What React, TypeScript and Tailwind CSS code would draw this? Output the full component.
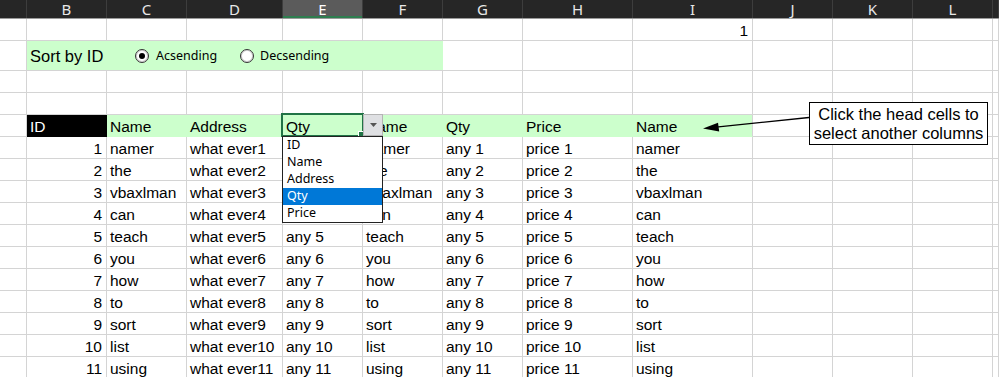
import React from "react";
import clsx from "clsx";

// column widths, A is only partly visible at the left edge
const cols = [
  "w-[27px]",
  "w-[80px]",
  "w-[80px]",
  "w-[96px]",
  "w-[80px]",
  "w-[80px]",
  "w-[80px]",
  "w-[110px]",
  "w-[120px]",
  "w-[80px]",
  "w-[80px]",
  "w-[80px]",
  "flex-1",
];
const letters = ["", "B", "C", "D", "E", "F", "G", "H", "I", "J", "K", "L", ""];

const words = ["namer", "the", "vbaxlman", "can", "teach", "you", "how", "to", "sort", "list", "using"];

type CellDef = { t?: React.ReactNode; right?: boolean; cls?: string };

function Cell({ i, def }: { i: number; def: CellDef }) {
  return (
    <div
      className={clsx(
        "shrink-0 h-full flex items-center pt-[2px] border-r border-b whitespace-nowrap overflow-visible",
        cols[i],
        def.cls ?? "border-[#d4d4d4]",
        def.right ? "justify-end pr-[4px]" : "pl-[3px]"
      )}
    >
      {def.t}
    </div>
  );
}

function Row({ cells, h = "h-[22px]" }: { cells: CellDef[]; h?: string }) {
  return (
    <div className={clsx("flex", h)}>
      {cols.map((_, i) => (
        <Cell key={i} i={i} def={cells[i] ?? {}} />
      ))}
    </div>
  );
}

function Radio({ checked }: { checked?: boolean }) {
  return (
    <span className="w-[14px] h-[14px] shrink-0 rounded-full border border-[#333] bg-white shadow-[inset_0_0_0_1px_#cfcfcf] flex items-center justify-center">
      {checked && <span className="w-[6px] h-[6px] rounded-full bg-black" />}
    </span>
  );
}

const green = "bg-[#ccffcc] border-[#ccffcc]";

export default function App() {
  return (
    <div className="relative w-[999px] h-[377px] overflow-hidden bg-white text-black font-['Liberation_Sans',Arial,sans-serif] text-[15.5px]">
      {/* column letters */}
      <div className="flex h-[19px] bg-[#262626] border-b border-[#9a9a9a]">
        {cols.map((c, i) => (
          <div
            key={i}
            className={clsx(
              "shrink-0 h-full flex items-center justify-center border-r border-[#3d3d3d] font-['Noto_Sans',sans-serif] text-[15px] leading-none",
              c,
              letters[i] === "E" ? "bg-[#5b5b5b] text-white shadow-[inset_0_-2px_0_#2e7d4f]" : "text-[#e8e8e8]"
            )}
          >
            {letters[i]}
          </div>
        ))}
      </div>

      {/* row 1 */}
      <Row cells={{ 8: { t: "1", right: true } } as unknown as CellDef[]} />

      {/* row 2: sort options */}
      <div className="flex h-[30px]">
        <div className={clsx("shrink-0 h-full border-r border-b border-[#d4d4d4]", cols[0])} />
        <div className="shrink-0 w-[416px] h-full bg-[#ccffcc] border-b border-[#d4d4d4] flex items-center pt-[1px] pl-[3px]">
          <span className="w-[105px] text-[16.5px]">Sort by ID</span>
          <Radio checked />
          <span className="ml-[7px] w-[84px] font-['Noto_Sans',sans-serif] text-[12.5px]">Acsending</span>
          <Radio />
          <span className="ml-[6px] font-['Noto_Sans',sans-serif] text-[12.5px]">Decsending</span>
        </div>
        {cols.slice(6).map((c, i) => (
          <div key={i} className={clsx("shrink-0 h-full border-r border-b border-[#d4d4d4]", c)} />
        ))}
      </div>

      <Row cells={[]} />
      <Row cells={[]} />

      {/* table head */}
      <Row
        cells={[
          {},
          { t: <span className="text-white">ID</span>, cls: "bg-black border-black" },
          { t: "Name", cls: green },
          { t: "Address", cls: green },
          { t: "Qty", cls: green },
          { t: "Name", cls: green },
          { t: "Qty", cls: green },
          { t: "Price", cls: green },
          { t: "Name", cls: "bg-[#ccffcc] border-b-[#ccffcc] border-r-[#d4d4d4]" },
        ]}
      />

      {words.map((w, i) => (
        <Row
          key={w}
          cells={[
            {},
            { t: i + 1, right: true },
            { t: w },
            { t: `what ever${i + 1}` },
            { t: `any ${i + 1}` },
            { t: w },
            { t: `any ${i + 1}` },
            { t: `price ${i + 1}` },
            { t: w },
          ]}
        />
      ))}

      {/* active cell E5 with its validation list */}
      <div className="absolute left-[281px] top-[113px] w-[83px] h-[24px] border-2 border-[#217346]" />
      <div className="absolute left-[359px] top-[132px] w-[5px] h-[5px] bg-[#217346] outline outline-1 outline-white" />
      <div className="absolute left-[363px] top-[114px] w-[20px] h-[22px] bg-[#dfe0e3] border border-[#b4b4b4] flex items-center justify-center">
        <svg width="7" height="4" viewBox="0 0 7 4">
          <polygon points="0,0 7,0 3.5,4" fill="#555" />
        </svg>
      </div>
      <div className="absolute left-[282px] top-[136px] w-[101px] border border-[#222] bg-white font-['Noto_Sans',sans-serif] text-[12.5px]">
        {["ID", "Name", "Address", "Qty", "Price"].map((o) => (
          <div
            key={o}
            className={clsx("h-[17px] flex items-center pl-[4px]", o === "Qty" && "bg-[#0078d7] text-white")}
          >
            {o}
          </div>
        ))}
      </div>

      {/* callout */}
      <svg className="absolute left-[700px] top-[110px]" width="112" height="24" viewBox="700 110 112 24">
        <line x1="809" y1="117.5" x2="716" y2="127.2" stroke="#000" strokeWidth="1.3" />
        <polygon points="703,128.6 718,122.8 719.2,131.6" fill="#000" />
      </svg>
      <div className="absolute left-[809px] top-[102px] w-[179px] h-[43px] border border-black bg-white flex flex-col items-center justify-center text-[16.5px] leading-[19px]">
        <span>Click the head cells to</span>
        <span>select another columns</span>
      </div>
    </div>
  );
}
